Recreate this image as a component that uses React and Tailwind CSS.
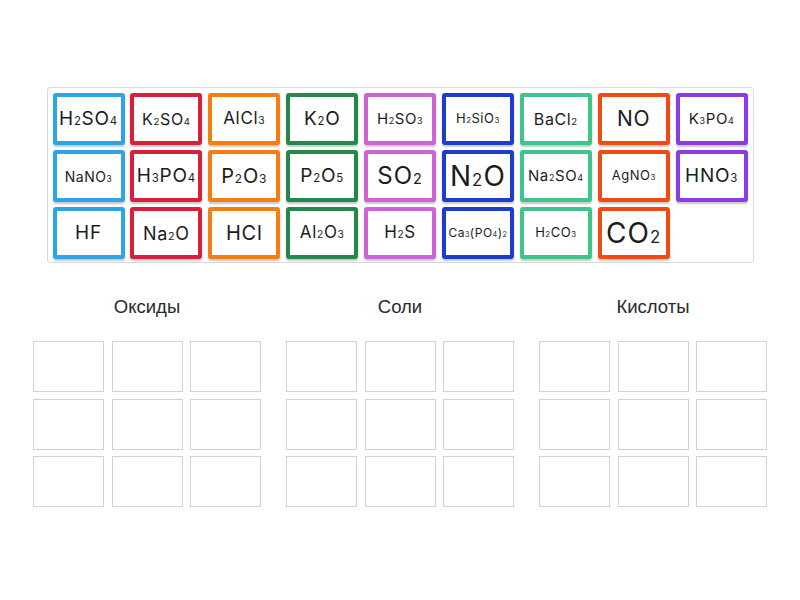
import React from "react";

const cards = [
  ["H2SO4", 19, "#2ea4e6"],
  ["K2SO4", 16, "#d7213b"],
  ["AlCl3", 17, "#f57d12"],
  ["K2O", 19, "#23884a"],
  ["H2SO3", 15, "#d062d8"],
  ["H2SiO3", 13, "#1f3dcc"],
  ["BaCl2", 16, "#3ec48c"],
  ["NO", 21, "#f04b12"],
  ["K3PO4", 15, "#8a3ce6"],
  ["NaNO3", 14, "#2ea4e6"],
  ["H3PO4", 19, "#d7213b"],
  ["P2O3", 20, "#f57d12"],
  ["P2O5", 19, "#23884a"],
  ["SO2", 24, "#d062d8"],
  ["N2O", 28, "#1f3dcc"],
  ["Na2SO4", 15, "#3ec48c"],
  ["AgNO3", 13, "#f04b12"],
  ["HNO3", 19, "#8a3ce6"],
  ["HF", 19, "#2ea4e6"],
  ["Na2O", 18, "#d7213b"],
  ["HCl", 20, "#f57d12"],
  ["Al2O3", 17, "#23884a"],
  ["H2S", 17, "#d062d8"],
  ["Ca3(PO4)2", 12, "#1f3dcc"],
  ["H2CO3", 13, "#3ec48c"],
  ["CO2", 28, "#f04b12"],
];

const groups = ["Оксиды", "Соли", "Кислоты"];

// digits in a formula are always subscripts here
const Formula = ({ text }) => (
  <span className="whitespace-nowrap">
    {text.split("").map((ch, i) =>
      /[0-9]/.test(ch) ? (
        <span key={i} className="text-[0.6em] align-baseline">
          {ch}
        </span>
      ) : (
        ch
      )
    )}
  </span>
);

const App = () => {
  return (
    <div className="bg-white min-h-[600px] w-[800px] flex flex-col items-center pt-[87px]">
      <div className="w-[707px] h-[176px] border border-[#dadada] rounded-[3px] p-[5px]">
        <div className="grid grid-cols-9 gap-x-[6px] gap-y-[5px]">
          {cards.map(([f, size, color], i) => (
            <div
              key={i}
              className="h-[52px] w-[72px] bg-white border-[4px] rounded-[3px] flex items-center justify-center text-[#1c1c1c] tracking-[0.04em] shadow-[0_2px_2px_rgba(0,0,0,0.22)] font-['Inter','Noto_Sans',sans-serif]"
              style={{ borderColor: color, fontSize: size }}
            >
              <Formula text={f} />
            </div>
          ))}
        </div>
      </div>

      <div className="flex gap-[25px] mt-[32px]">
        {groups.map((g) => (
          <div key={g} className="w-[228px] flex flex-col">
            <div className="text-center text-[18.5px] leading-[24px] text-[#2a2a2a] font-['Liberation_Sans',Arial,sans-serif] mb-[22px]">
              {g}
            </div>
            <div className="grid grid-cols-3 gap-x-[7.5px] gap-y-[6.5px]">
              {Array.from({ length: 9 }).map((_, i) => (
                <div
                  key={i}
                  className="h-[51px] border border-[#d2d2d2] bg-white"
                />
              ))}
            </div>
          </div>
        ))}
      </div>
    </div>
  );
};

export default App;
